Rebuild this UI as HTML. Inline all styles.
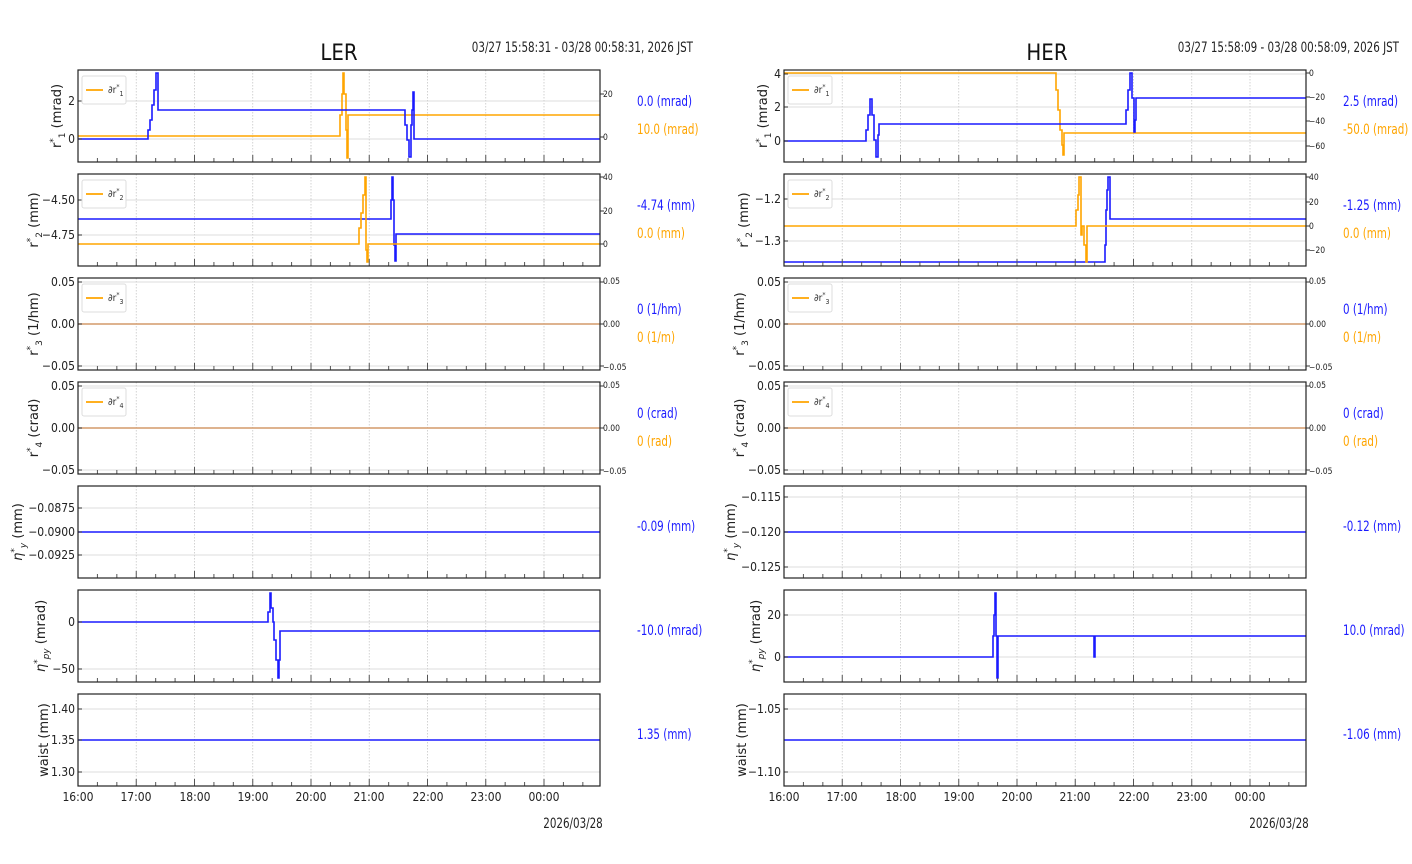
<!DOCTYPE html>
<html><head><meta charset="utf-8">
<style>
html,body{margin:0;padding:0;background:#fff;}
svg{display:block;font-family:"Liberation Sans Narrow","DejaVu Sans Condensed","Liberation Sans",sans-serif;}
.t{font-size:12px;fill:#222;}
.tl{font-size:12px;fill:#222;text-anchor:end;}
.tr{font-size:8.5px;fill:#222;}
.yl{font-size:13px;fill:#222;text-anchor:middle;font-family:"DejaVu Sans","Liberation Sans",sans-serif;}
.b{font-size:14px;fill:#1a1aff;}
.o{font-size:14px;fill:#ffa500;}
.lg{font-size:10px;fill:#333;}
.xl{font-size:12px;fill:#222;text-anchor:middle;}
</style></head><body>
<svg id="s" width="1412" height="864" viewBox="0 0 1412 864">
<g id="grid"></g>
<g id="data" fill="none" stroke-width="1.6">
<polyline stroke="#ffa500" points="78,136 340,136 340,115 342,115 342,94 343,94 343,73 344,73 344,94 346,94 346,130 347,130 347,158 348,158 348,115 600,115"/>
<polyline stroke="#1a1aff" points="78,139 148,139 148,130 150,130 150,120 152,120 152,105 154,105 154,90 156,90 156,73 158,73 158,110 405,110 405,125 407,125 407,140 409,140 409,157 411,157 411,125 412,125 412,110 413,110 413,92 414,92 414,139 600,139"/>
<polyline stroke="#1a1aff" points="78,219 391,219 391,200 392,200 392,177 393,177 393,200 394,200 394,245 395,245 395,261 396,261 396,234 600,234"/>
<polyline stroke="#ffa500" points="78,244 359,244 359,228 361,228 361,213 363,213 363,195 365,195 365,177 366,177 366,250 367,250 367,262 368,262 368,244 600,244"/>
<line stroke="#d49a6a" x1="78" y1="324" x2="600" y2="324"/>
<line stroke="#d49a6a" x1="78" y1="428" x2="600" y2="428"/>
<line stroke="#1a1aff" x1="78" y1="532" x2="600" y2="532"/>
<polyline stroke="#1a1aff" points="78,622 268,622 268,612 270,612 270,593 271,593 271,608 273,608 273,622 274,622 274,640 276,640 276,660 278,660 278,678 279,678 279,660 280,660 280,631 600,631"/>
<line stroke="#1a1aff" x1="78" y1="740" x2="600" y2="740"/>

<polyline stroke="#ffa500" points="784,73 1056,73 1056,90 1058,90 1058,110 1060,110 1060,130 1062,130 1062,145 1063,145 1063,155 1064,155 1064,133 1306,133"/>
<polyline stroke="#1a1aff" points="784,141 866,141 866,130 868,130 868,115 870,115 870,99 872,99 872,115 874,115 874,140 876,140 876,157 878,157 878,135 879,135 879,124 1126,124 1126,110 1128,110 1128,90 1130,90 1130,73 1132,73 1132,98 1134,98 1134,132 1135,132 1135,120 1136,120 1136,98 1306,98"/>
<polyline stroke="#1a1aff" points="784,262 1105,262 1105,245 1106,245 1106,210 1107,210 1107,190 1108,190 1108,177 1110,177 1110,219 1306,219"/>
<polyline stroke="#ffa500" points="784,226 1076,226 1076,210 1078,210 1078,195 1079,195 1079,177 1081,177 1081,235 1082,235 1082,226 1084,226 1084,245 1086,245 1086,262 1087,262 1087,226 1306,226"/>
<line stroke="#d49a6a" x1="784" y1="324" x2="1306" y2="324"/>
<line stroke="#d49a6a" x1="784" y1="428" x2="1306" y2="428"/>
<line stroke="#1a1aff" x1="784" y1="532" x2="1306" y2="532"/>
<polyline stroke="#1a1aff" points="784,657 993,657 993,636 994,636 994,615 995,615 995,593 996,593 996,636 997,636 997,678 998,678 998,636 1094,636 1094,657 1095,657 1095,636 1306,636"/>
<line stroke="#1a1aff" x1="784" y1="740" x2="1306" y2="740"/>
</g>
<g id="frames"></g>
<g id="legends"></g>

<text x="339" y="60" style="font-size:22px;fill:#111;text-anchor:middle">LER</text>
<text class="cz" x="693" y="52" style="font-size:14px;fill:#222;text-anchor:end">03/27 15:58:31 - 03/28 00:58:31, 2026 JST</text>
<text x="1047" y="60" style="font-size:22px;fill:#111;text-anchor:middle">HER</text>
<text class="cz" x="1399" y="52" style="font-size:14px;fill:#222;text-anchor:end">03/27 15:58:09 - 03/28 00:58:09, 2026 JST</text>

<text class="tl" x="75" y="105">2</text><text class="tl" x="75" y="143">0</text>
<text class="tl" x="75" y="204">−4.50</text><text class="tl" x="75" y="239">−4.75</text>
<text class="tl" x="75" y="286">0.05</text><text class="tl" x="75" y="328">0.00</text><text class="tl" x="75" y="370">−0.05</text>
<text class="tl" x="75" y="390">0.05</text><text class="tl" x="75" y="432">0.00</text><text class="tl" x="75" y="474">−0.05</text>
<text class="tl" x="75" y="512">−0.0875</text><text class="tl" x="75" y="536">−0.0900</text><text class="tl" x="75" y="559">−0.0925</text>
<text class="tl" x="75" y="626">0</text><text class="tl" x="75" y="673">−50</text>
<text class="tl" x="75" y="713">1.40</text><text class="tl" x="75" y="744">1.35</text><text class="tl" x="75" y="776">1.30</text>
<text class="tr" x="603" y="97">20</text><text class="tr" x="603" y="140">0</text>
<text class="tr" x="603" y="180">40</text><text class="tr" x="603" y="214">20</text><text class="tr" x="603" y="247">0</text>
<text class="tr" x="603" y="284">0.05</text><text class="tr" x="603" y="327">0.00</text><text class="tr" x="603" y="370">−0.05</text>
<text class="tr" x="603" y="388">0.05</text><text class="tr" x="603" y="431">0.00</text><text class="tr" x="603" y="474">−0.05</text>

<text class="tl" x="781" y="78">4</text><text class="tl" x="781" y="111">2</text><text class="tl" x="781" y="145">0</text>
<text class="tl" x="781" y="203">−1.2</text><text class="tl" x="781" y="245">−1.3</text>
<text class="tl" x="781" y="286">0.05</text><text class="tl" x="781" y="328">0.00</text><text class="tl" x="781" y="370">−0.05</text>
<text class="tl" x="781" y="390">0.05</text><text class="tl" x="781" y="432">0.00</text><text class="tl" x="781" y="474">−0.05</text>
<text class="tl" x="781" y="501">−0.115</text><text class="tl" x="781" y="536">−0.120</text><text class="tl" x="781" y="571">−0.125</text>
<text class="tl" x="781" y="619">20</text><text class="tl" x="781" y="661">0</text>
<text class="tl" x="781" y="713">−1.05</text><text class="tl" x="781" y="776">−1.10</text>
<text class="tr" x="1309" y="76">0</text><text class="tr" x="1309" y="100">−20</text><text class="tr" x="1309" y="124">−40</text><text class="tr" x="1309" y="149">−60</text>
<text class="tr" x="1309" y="180">40</text><text class="tr" x="1309" y="205">20</text><text class="tr" x="1309" y="229">0</text><text class="tr" x="1309" y="253">−20</text>
<text class="tr" x="1309" y="284">0.05</text><text class="tr" x="1309" y="327">0.00</text><text class="tr" x="1309" y="370">−0.05</text>
<text class="tr" x="1309" y="388">0.05</text><text class="tr" x="1309" y="431">0.00</text><text class="tr" x="1309" y="474">−0.05</text>

<text class="yl" transform="translate(61,116) rotate(-90)">r<tspan dy="-5" font-size="9">*</tspan><tspan dy="9" font-size="9">1</tspan><tspan dy="-4"> (mrad)</tspan></text>
<text class="yl" transform="translate(38,220) rotate(-90)">r<tspan dy="-5" font-size="9">*</tspan><tspan dy="9" font-size="9">2</tspan><tspan dy="-4"> (mm)</tspan></text>
<text class="yl" transform="translate(38,324) rotate(-90)">r<tspan dy="-5" font-size="9">*</tspan><tspan dy="9" font-size="9">3</tspan><tspan dy="-4"> (1/hm)</tspan></text>
<text class="yl" transform="translate(38,428) rotate(-90)">r<tspan dy="-5" font-size="9">*</tspan><tspan dy="9" font-size="9">4</tspan><tspan dy="-4"> (crad)</tspan></text>
<text class="yl" transform="translate(22,532) rotate(-90)"><tspan font-style="italic">η</tspan><tspan dy="-5" font-size="9">*</tspan><tspan dy="9" font-size="9" font-style="italic">y</tspan><tspan dy="-4"> (mm)</tspan></text>
<text class="yl" transform="translate(45,636) rotate(-90)"><tspan font-style="italic">η</tspan><tspan dy="-5" font-size="9">*</tspan><tspan dy="9" font-size="9" font-style="italic">py</tspan><tspan dy="-4"> (mrad)</tspan></text>
<text class="yl" transform="translate(48,740) rotate(-90)">waist (mm)</text>
<text class="yl" transform="translate(767,116) rotate(-90)">r<tspan dy="-5" font-size="9">*</tspan><tspan dy="9" font-size="9">1</tspan><tspan dy="-4"> (mrad)</tspan></text>
<text class="yl" transform="translate(748,220) rotate(-90)">r<tspan dy="-5" font-size="9">*</tspan><tspan dy="9" font-size="9">2</tspan><tspan dy="-4"> (mm)</tspan></text>
<text class="yl" transform="translate(744,324) rotate(-90)">r<tspan dy="-5" font-size="9">*</tspan><tspan dy="9" font-size="9">3</tspan><tspan dy="-4"> (1/hm)</tspan></text>
<text class="yl" transform="translate(744,428) rotate(-90)">r<tspan dy="-5" font-size="9">*</tspan><tspan dy="9" font-size="9">4</tspan><tspan dy="-4"> (crad)</tspan></text>
<text class="yl" transform="translate(735,532) rotate(-90)"><tspan font-style="italic">η</tspan><tspan dy="-5" font-size="9">*</tspan><tspan dy="9" font-size="9" font-style="italic">y</tspan><tspan dy="-4"> (mm)</tspan></text>
<text class="yl" transform="translate(760,636) rotate(-90)"><tspan font-style="italic">η</tspan><tspan dy="-5" font-size="9">*</tspan><tspan dy="9" font-size="9" font-style="italic">py</tspan><tspan dy="-4"> (mrad)</tspan></text>
<text class="yl" transform="translate(746,740) rotate(-90)">waist (mm)</text>

<text class="b" x="637" y="106">0.0 (mrad)</text><text class="o" x="637" y="134">10.0 (mrad)</text>
<text class="b" x="637" y="210">-4.74 (mm)</text><text class="o" x="637" y="238">0.0 (mm)</text>
<text class="b" x="637" y="314">0 (1/hm)</text><text class="o" x="637" y="342">0 (1/m)</text>
<text class="b" x="637" y="418">0 (crad)</text><text class="o" x="637" y="446">0 (rad)</text>
<text class="b" x="637" y="531">-0.09 (mm)</text>
<text class="b" x="637" y="635">-10.0 (mrad)</text>
<text class="b" x="637" y="739">1.35 (mm)</text>
<text class="b" x="1343" y="106">2.5 (mrad)</text><text class="o" x="1343" y="134">-50.0 (mrad)</text>
<text class="b" x="1343" y="210">-1.25 (mm)</text><text class="o" x="1343" y="238">0.0 (mm)</text>
<text class="b" x="1343" y="314">0 (1/hm)</text><text class="o" x="1343" y="342">0 (1/m)</text>
<text class="b" x="1343" y="418">0 (crad)</text><text class="o" x="1343" y="446">0 (rad)</text>
<text class="b" x="1343" y="531">-0.12 (mm)</text>
<text class="b" x="1343" y="635">10.0 (mrad)</text>
<text class="b" x="1343" y="739">-1.06 (mm)</text>

<text class="xl" x="78" y="801">16:00</text><text class="xl" x="136" y="801">17:00</text><text class="xl" x="195" y="801">18:00</text><text class="xl" x="253" y="801">19:00</text><text class="xl" x="311" y="801">20:00</text><text class="xl" x="369" y="801">21:00</text><text class="xl" x="428" y="801">22:00</text><text class="xl" x="486" y="801">23:00</text><text class="xl" x="544" y="801">00:00</text>
<text class="xl" x="784" y="801">16:00</text><text class="xl" x="842" y="801">17:00</text><text class="xl" x="901" y="801">18:00</text><text class="xl" x="959" y="801">19:00</text><text class="xl" x="1017" y="801">20:00</text><text class="xl" x="1075" y="801">21:00</text><text class="xl" x="1134" y="801">22:00</text><text class="xl" x="1192" y="801">23:00</text><text class="xl" x="1250" y="801">00:00</text>
<text class="cz" x="573" y="828" style="font-size:14px;fill:#222;text-anchor:middle">2026/03/28</text>
<text class="cz" x="1279" y="828" style="font-size:14px;fill:#222;text-anchor:middle">2026/03/28</text>

<text class="lg" x="108" y="93">∂r<tspan dy="-4" font-size="7">*</tspan><tspan dy="7" font-size="7">1</tspan></text>
<text class="lg" x="108" y="197">∂r<tspan dy="-4" font-size="7">*</tspan><tspan dy="7" font-size="7">2</tspan></text>
<text class="lg" x="108" y="301">∂r<tspan dy="-4" font-size="7">*</tspan><tspan dy="7" font-size="7">3</tspan></text>
<text class="lg" x="108" y="405">∂r<tspan dy="-4" font-size="7">*</tspan><tspan dy="7" font-size="7">4</tspan></text>
<text class="lg" x="814" y="93">∂r<tspan dy="-4" font-size="7">*</tspan><tspan dy="7" font-size="7">1</tspan></text>
<text class="lg" x="814" y="197">∂r<tspan dy="-4" font-size="7">*</tspan><tspan dy="7" font-size="7">2</tspan></text>
<text class="lg" x="814" y="301">∂r<tspan dy="-4" font-size="7">*</tspan><tspan dy="7" font-size="7">3</tspan></text>
<text class="lg" x="814" y="405">∂r<tspan dy="-4" font-size="7">*</tspan><tspan dy="7" font-size="7">4</tspan></text>
</svg>
<script>
(function(){
var NS="http://www.w3.org/2000/svg";
function el(g,n,a){var e=document.createElementNS(NS,n);for(var k in a)e.setAttribute(k,a[k]);document.getElementById(g).insertBefore(e,null);return e;}
var tops=[70,174,278,382,486,590,694];
var hl={L:[[101,139],[200,235],[282,324,366],[386,428,470],[508,532,555],[622,669],[709,740,772]],
R:[[74,107,141],[199,241],[282,324,366],[386,428,470],[497,532,567],[615,657],[709,772]]};
var rt={L:[[94,137],[177,211,244],[282,324,366],[386,428,470]],R:[[73,97,121,146],[177,202,226,250],[282,324,366],[386,428,470]]};
[["L",78],["R",784]].forEach(function(c){
 var x0=c[1],x1=x0+522,hs=58.25;
 tops.forEach(function(t,i){
  var b=t+92;
  for(var k=1;k<9;k++){var x=x0+k*hs;el("grid","line",{x1:x,x2:x,y1:t,y2:b,stroke:"#c8c8c8","stroke-width":0.8,"stroke-dasharray":"1.5,1.5"});}
  hl[c[0]][i].forEach(function(y){el("grid","line",{x1:x0,x2:x1,y1:y,y2:y,stroke:"#d0d0d0","stroke-width":0.8});
   el("frames","line",{x1:x0,x2:x0+4,y1:y,y2:y,stroke:"#333","stroke-width":1});});
  for(var m=0;m<27;m++){var x=x0+m*hs/3;if(x>x1)break;var L=(m%3==0)?7:4;
   el("frames","line",{x1:x,x2:x,y1:b,y2:b-L,stroke:"#555","stroke-width":1});}
  el("frames","rect",{x:x0,y:t,width:522,height:92,fill:"none",stroke:"#222","stroke-width":1.2});
  if(i<4){
   (rt[c[0]][i]).forEach(function(y){el("frames","line",{x1:x1,x2:x1+4,y1:y,y2:y,stroke:"#333","stroke-width":1});});
   el("legends","rect",{x:x0+4,y:t+6,width:44,height:28,rx:2,fill:"#fff","fill-opacity":0.9,stroke:"#ddd","stroke-width":1});
   el("legends","line",{x1:x0+8,x2:x0+25,y1:t+20,y2:t+20,stroke:"#ffa500","stroke-width":1.8});
  }
 });
});
var s=document.getElementById("s");
s.querySelectorAll(".lg").forEach(function(e){s.appendChild(e);});
s.querySelectorAll(".b,.o,.cz").forEach(function(e){
 var w=e.getComputedTextLength();
 e.setAttribute("textLength",(w*0.82).toFixed(1));
 e.setAttribute("lengthAdjust","spacingAndGlyphs");
});
})();
</script>
</body></html>
